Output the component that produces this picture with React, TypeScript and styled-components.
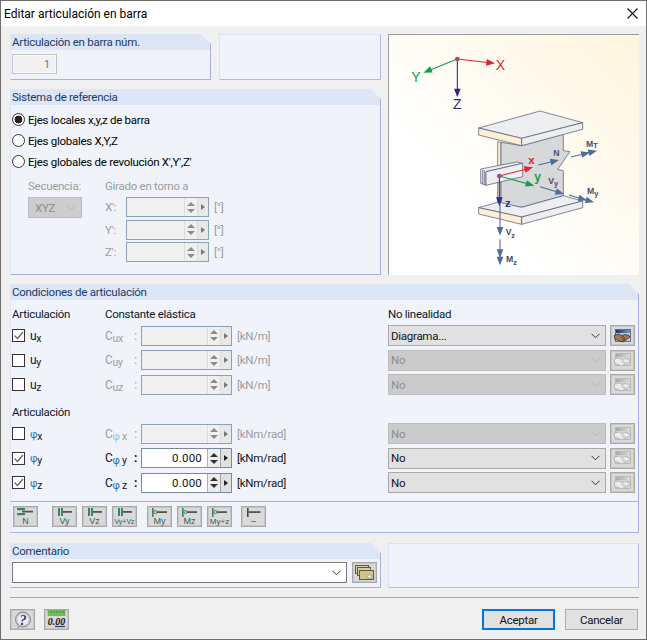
import React from "react";
import styled, { createGlobalStyle } from "styled-components";

const GlobalStyle = createGlobalStyle`
  html, body {
    margin: 0;
    padding: 0;
    background: #f0f0f0;
  }
  body {
    font-family: Roboto, "Liberation Sans", sans-serif;
    font-size: 11.5px;
    letter-spacing: -0.27px;
    color: #000;
  }
`;

const Window = styled.div`
  width: 647px;
  height: 640px;
  box-sizing: border-box;
  border: 1px solid #6e6e6e;
  background: #f0f0f0;
  display: flex;
  flex-direction: column;
  overflow: hidden;
`;

const TitleBar = styled.div`
  height: 25px;
  flex: none;
  background: #fff;
  display: flex;
  align-items: center;
  justify-content: space-between;
  padding: 0 8px 0 3px;
  font-size: 12px;
  letter-spacing: 0;
`;

const CloseButton = styled.svg`
  width: 11px;
  height: 11px;
  stroke: #111;
  stroke-width: 1.1;
`;

const Body = styled.div`
  flex: 1;
  display: flex;
  flex-direction: column;
  padding: 8px 7px 0 9px;
`;

const TopGrid = styled.div`
  display: grid;
  grid-template-columns: 371px 251px;
  column-gap: 7px;
  height: 241px;
`;

const LeftColumn = styled.div`
  display: flex;
  flex-direction: column;
  gap: 9px;
`;

const NumberRow = styled.div`
  display: grid;
  grid-template-columns: 201px 162px;
  column-gap: 8px;
  height: 46px;
`;

const Group = styled.section<{ $height?: number }>`
  box-sizing: border-box;
  background: #f0f4fa;
  border-left: 1px solid #dfe6f5;
  border-right: 1px solid #a8aeea;
  border-bottom: 1px solid #a8aeea;
  clip-path: polygon(0 0, calc(100% - 10px) 0, 100% 10px, 100% 100%, 0 100%);
  ${({ $height }) => ($height ? `height: ${$height}px;` : "")}
`;

const EmptyPanel = styled.div`
  box-sizing: border-box;
  background: #f0f3f9;
  border: 1px solid #dbe1f6;
  border-bottom-color: #b4baea;
  border-right-color: #b4baea;
`;

const GroupHeader = styled.h3`
  margin: 0;
  height: 16px;
  line-height: 16px;
  padding-left: 1px;
  background: #dce6f4;
  color: #1d3a6b;
  font-size: 11.5px;
  font-weight: 400;
`;

const NumberField = styled.div`
  margin: 4px 0 0 1px;
  width: 45px;
  height: 20px;
  box-sizing: border-box;
  border: 1px solid #c4c4c4;
  box-shadow: inset 0 0 0 1px #f8f8f8;
  background: #f0f0f0;
  color: #777;
  text-align: right;
  line-height: 18px;
  padding-right: 6px;
`;

const RadioList = styled.div`
  display: flex;
  flex-direction: column;
  gap: 8px;
  padding: 8px 0 0 1px;
`;

const RadioRow = styled.label`
  display: flex;
  align-items: center;
  height: 13px;
  gap: 3px;
`;

const RadioDot = styled.span<{ $checked?: boolean }>`
  width: 13px;
  height: 13px;
  box-sizing: border-box;
  border-radius: 50%;
  border: 1px solid #333;
  background: ${({ $checked }) =>
    $checked ? "radial-gradient(circle, #222 0 3.6px, #fff 4.2px)" : "#fff"};
`;

const RotationGrid = styled.div`
  display: grid;
  grid-template-columns: 77px 1fr;
  padding: 10px 0 0 17px;
  color: #9c9c9c;
`;

const RotationLabel = styled.div`
  height: 16px;
  line-height: 16px;
  margin-bottom: 3px;
`;

const SequenceCombo = styled.div`
  width: 54px;
  height: 21px;
  box-sizing: border-box;
  background: #cdcdcd;
  border: 1px solid #bdbdbd;
  display: flex;
  align-items: center;
  justify-content: space-between;
  padding: 0 5px 0 6px;
  color: #8c8c8c;
`;

const AngleRows = styled.div`
  display: flex;
  flex-direction: column;
  gap: 2.5px;
`;

const AngleRow = styled.div`
  display: grid;
  grid-template-columns: 21px 83px 1fr;
  align-items: center;
  height: 20px;
`;

const Unit = styled.span<{ $disabled?: boolean }>`
  padding-left: 5px;
  white-space: nowrap;
  color: ${({ $disabled }) => ($disabled ? "#9c9c9c" : "#10131f")};
`;

const SpinBox = styled.div<{ $disabled?: boolean }>`
  height: 20px;
  box-sizing: border-box;
  border: 1px solid ${({ $disabled }) => ($disabled ? "#8ba1b8" : "#7b8a99")};
  background: ${({ $disabled }) => ($disabled ? "#f0f0f0" : "#fff")};
  display: grid;
  grid-template-columns: 1fr 13px 11px;
`;

const SpinValue = styled.span`
  text-align: right;
  line-height: 18px;
  padding-right: 5px;
  letter-spacing: 0.2px;
  color: #10131f;
`;

const SpinColumn = styled.div<{ $disabled?: boolean }>`
  display: flex;
  flex-direction: column;
  align-items: center;
  justify-content: center;
  gap: 3px;
  border-left: 1px solid ${({ $disabled }) => ($disabled ? "#dcdcdc" : "#b0b0b0")};
  background: ${({ $disabled }) => ($disabled ? "#f0f0f0" : "#ececec")};
`;

const SpinArrow = styled.span<{ $down?: boolean; $disabled?: boolean }>`
  width: 0;
  height: 0;
  border-left: 4px solid transparent;
  border-right: 4px solid transparent;
  ${({ $down, $disabled }) =>
    `border-${$down ? "top" : "bottom"}: 4px solid ${$disabled ? "#8c8c8c" : "#333"};`}
`;

const SpinNext = styled.div<{ $disabled?: boolean }>`
  display: flex;
  align-items: center;
  justify-content: center;
  border-left: 1px solid ${({ $disabled }) => ($disabled ? "#dcdcdc" : "#a0a0a0")};
  background: ${({ $disabled }) => ($disabled ? "#e8e8e8" : "#e0e0e0")};
  &::after {
    content: "";
    border-top: 3.5px solid transparent;
    border-bottom: 3.5px solid transparent;
    border-left: 4px solid ${({ $disabled }) => ($disabled ? "#777" : "#222")};
  }
`;

const Picture = styled.div`
  box-sizing: border-box;
  border-top: 1px solid #9c9c9c;
  border-left: 1px solid #9c9c9c;
  background: linear-gradient(to top right, #ffffff 30%, #fdf5dd 100%);
`;

const PictureSvg = styled.svg`
  display: block;
  width: 250px;
  height: 240px;
`;

const ConditionsGroup = styled(Group)`
  margin-top: 9px;
  height: 218px;
`;

const ConditionsBody = styled.div`
  padding: 6px 0 0 1px;
`;

const ConditionRow = styled.div`
  display: grid;
  grid-template-columns: 93px 36px 91px 156px 222px 25px;
  align-items: center;
  height: 20px;
  margin-bottom: 4.5px;
`;

const ColumnTitles = styled(ConditionRow)`
  height: 16px;
  margin-bottom: 3px;
  color: #10131f;
`;

const TitleSpanLeft = styled.span`
  grid-column: 2 / span 3;
`;

const TitleRight = styled.span`
  grid-column: 5 / span 2;
`;

const SecondHeading = styled.div`
  height: 16px;
  line-height: 16px;
  margin: 10px 0 3px;
  color: #10131f;
`;

const CheckCell = styled.label`
  display: flex;
  align-items: center;
  gap: 5px;
`;

const CheckBox = styled.span`
  width: 13px;
  height: 13px;
  box-sizing: border-box;
  border: 1px solid #333;
  background: #fff;
  display: flex;
`;

const CheckMark = styled.svg`
  width: 11px;
  height: 11px;
  fill: none;
  stroke: #666;
  stroke-width: 1.3;
`;

const Symbol = styled.span`
  white-space: nowrap;
  font-size: 12px;
  color: #10131f;
  sub {
    font-size: 10.5px;
    line-height: 0;
    vertical-align: -2px;
  }
`;

const Phi = styled.span<{ $disabled?: boolean }>`
  color: ${({ $disabled }) => ($disabled ? "#9dc0dc" : "#1d6fb5")};
  font-size: 10.5px;
`;

const SpringLabel = styled.span<{ $disabled?: boolean }>`
  display: flex;
  justify-content: space-between;
  padding-right: 4px;
  font-size: 12px;
  color: ${({ $disabled }) => ($disabled ? "#9c9c9c" : "#10131f")};
  sub {
    font-size: 10.5px;
    line-height: 0;
    vertical-align: -2px;
  }
  b {
    font-weight: 700;
  }
`;

const Combo = styled.div<{ $disabled?: boolean }>`
  width: 218px;
  height: 21px;
  box-sizing: border-box;
  background: ${({ $disabled }) => ($disabled ? "#cbcbcb" : "#e1e1e1")};
  border: 1px solid ${({ $disabled }) => ($disabled ? "#bdbdbd" : "#a8a8a8")};
  color: ${({ $disabled }) => ($disabled ? "#8c8c8c" : "#10131f")};
  display: flex;
  align-items: center;
  justify-content: space-between;
  padding: 0 5px 0 2px;
`;

const Chevron = styled.svg<{ $disabled?: boolean }>`
  width: 9px;
  height: 6px;
  fill: none;
  stroke: ${({ $disabled }) => ($disabled ? "#b4b4b4" : "#333")};
  stroke-width: 1;
`;

const IconButton = styled.button`
  width: 25px;
  height: 21px;
  box-sizing: border-box;
  padding: 0;
  border: 1px solid #a9a9a9;
  box-shadow: inset 0 0 0 1px #c6c6c6;
  background: #d9d9d9;
  display: flex;
  align-items: center;
  justify-content: center;
`;

const ToolbarGroup = styled.div`
  box-sizing: border-box;
  height: 31px;
  flex: none;
  background: #f0f4fa;
  border-left: 1px solid #dfe6f5;
  border-right: 1px solid #a8aeea;
  border-bottom: 1px solid #a8aeea;
  display: flex;
  align-items: center;
  padding: 0 0 1px 2px;
`;

const ToolGap = styled.div<{ $size: number }>`
  width: ${({ $size }) => $size}px;
`;

const CommentRow = styled.div`
  margin-top: 10px;
  display: grid;
  grid-template-columns: 371px 251px;
  column-gap: 7px;
  height: 45px;
`;

const CommentBody = styled.div`
  display: flex;
  align-items: center;
  gap: 5px;
  padding: 3px 0 0 1px;
`;

const CommentInput = styled.div`
  width: 335px;
  height: 21px;
  box-sizing: border-box;
  border: 1px solid #7a7a7a;
  background: #fff;
  display: flex;
  align-items: center;
  justify-content: flex-end;
  padding-right: 5px;
`;

const Separator = styled.hr`
  margin: 9px 0 0;
  border: 0;
  height: 1px;
  background: #a6a6a6;
`;

const Footer = styled.div`
  display: flex;
  align-items: center;
  margin-top: 11px;
  padding-right: 1px;
`;

const FooterIcons = styled.div`
  display: flex;
  gap: 9px;
  margin-right: auto;
`;

const FooterButtons = styled.div`
  display: flex;
  gap: 10px;
`;

const DialogButton = styled.button<{ $primary?: boolean }>`
  width: 73px;
  height: 21px;
  box-sizing: border-box;
  padding: 0;
  font: inherit;
  letter-spacing: inherit;
  color: #111;
  background: #e1e1e1;
  border: ${({ $primary }) => ($primary ? "2px solid #0078d7" : "1px solid #adadad")};
`;

const HandIcon = ({ disabled }: { disabled?: boolean }) => (
  <svg width="17" height="14" viewBox="0 0 17 14">
    <defs>
      <linearGradient id={disabled ? "barOff" : "barOn"} x1="0" x2="1" y1="0" y2="0">
        <stop offset="0" stopColor={disabled ? "#a8a8a8" : "#1c3468"} />
        <stop offset="1" stopColor={disabled ? "#dadada" : "#5f9ad8"} />
      </linearGradient>
    </defs>
    <rect x="1.5" y="0.5" width="15" height="12" fill={disabled ? "#d4d4d4" : "#c7ced8"} stroke={disabled ? "#b4b4b4" : "#4b5563"} strokeWidth="0.8" />
    <rect x="2" y="1" width="14" height="3" fill={`url(#${disabled ? "barOff" : "barOn"})`} />
    <path
      d="M0.5 6 L5 5 L8 6.5 L11 5.5 L15 6.5 L16 8 L12 11 L8 13 L4.5 11.5 L0.5 10 Z"
      fill={disabled ? "#ececec" : "#a4775c"}
      stroke={disabled ? "#a8a8a8" : "#33231d"}
      strokeWidth="0.7"
    />
    <path d="M7 8.5 L10 7.5 M8 10 L11 9 M9 11.5 L12 10" stroke={disabled ? "#a8a8a8" : "#33231d"} strokeWidth="0.6" />
  </svg>
);

const StackIcon = () => (
  <svg width="19" height="15" viewBox="0 0 19 15">
    <rect x="0.5" y="0.5" width="13" height="8" fill="#d6cfa4" stroke="#5f5a3c" />
    <rect x="2.5" y="2.5" width="13" height="8" fill="#d6cfa4" stroke="#5f5a3c" />
    <rect x="4.5" y="5.5" width="14" height="9" fill="#cfc68f" stroke="#5f5a3c" />
    <rect x="13" y="10" width="3" height="3" fill="#fff" stroke="#777" strokeWidth="0.5" />
  </svg>
);

type ToolKind = "axial" | "shear" | "moment" | "free";

const ToolIcon = ({ kind, label, size = 9 }: { kind: ToolKind; label: string; size?: number }) => (
  <svg width="23" height="19" viewBox="0 0 23 19">
    {kind === "axial" && (
      <>
        <rect x="3" y="1" width="8" height="2.2" fill="#3f7f6c" />
        <rect x="3" y="6" width="8" height="2.2" fill="#3f7f6c" />
        <rect x="8" y="3.7" width="11" height="1.8" fill="#555" />
      </>
    )}
    {kind === "shear" && (
      <>
        <rect x="5" y="1" width="2" height="8" fill="#3f7f6c" />
        <rect x="8" y="1" width="2" height="8" fill="#3f7f6c" />
        <rect x="10" y="4" width="9" height="1.8" fill="#555" />
      </>
    )}
    {kind === "moment" && (
      <>
        <rect x="4" y="1" width="1.6" height="9" fill="#3f7f6c" />
        <circle cx="7.5" cy="5" r="1.6" fill="none" stroke="#3f7f6c" />
        <rect x="9" y="4.2" width="10" height="1.8" fill="#555" />
      </>
    )}
    {kind === "free" && (
      <>
        <rect x="5" y="1" width="1.6" height="9" fill="#444" />
        <rect x="6.5" y="4.2" width="12" height="1.8" fill="#555" />
      </>
    )}
    <text x="11.5" y="17" textAnchor="middle" fontSize={size} fontFamily="Liberation Sans" letterSpacing="0" fill="#33615a">
      {label}
    </text>
  </svg>
);

const HelpIcon = () => (
  <svg width="20" height="18" viewBox="0 0 20 18">
    <circle cx="10" cy="8.5" r="7.5" fill="#c9c9ce" stroke="#85858c" />
    <circle cx="10" cy="8.5" r="5.5" fill="#f0f0f3" />
    <path d="M5 14 L4 17.5 L9 15.5 Z" fill="#a8a8ae" />
    <text x="10" y="13.5" textAnchor="middle" fontSize="14" fontWeight="700" fontStyle="italic" fontFamily="Liberation Serif" fill="#27357a">
      ?
    </text>
  </svg>
);

const DecimalsIcon = () => (
  <svg width="21" height="19" viewBox="0 0 21 19">
    <rect x="2" y="0.5" width="17" height="5" fill="#6fbf55" stroke="#4d9a3c" strokeWidth="0.5" />
    <path d="M5 1v2M8 1v2M11 1v2M14 1v2M17 1v2" stroke="#2f7a2a" strokeWidth="0.7" />
    <text x="10.5" y="14.5" textAnchor="middle" fontSize="10" fontWeight="700" fontStyle="italic" fontFamily="Liberation Serif" letterSpacing="0" fill="#111">
      0.00
    </text>
    <path d="M9 16.5h10" stroke="#27357a" strokeWidth="1.2" />
  </svg>
);

const ChevronDown = ({ disabled }: { disabled?: boolean }) => (
  <Chevron $disabled={disabled} viewBox="0 0 9 6">
    <path d="M0.5 0.8 L4.5 4.8 L8.5 0.8" />
  </Chevron>
);

const SpinField = ({ value, disabled }: { value?: string; disabled?: boolean }) => (
  <SpinBox $disabled={disabled}>
    <SpinValue>{value}</SpinValue>
    <SpinColumn $disabled={disabled}>
      <SpinArrow $disabled={disabled} />
      <SpinArrow $disabled={disabled} $down />
    </SpinColumn>
    <SpinNext $disabled={disabled} />
  </SpinBox>
);

const Arrow = ({ x1, y1, x2, y2, color, double }: { x1: number; y1: number; x2: number; y2: number; color: string; double?: boolean }) => {
  const angle = (Math.atan2(y2 - y1, x2 - x1) * 180) / Math.PI;
  const len = Math.hypot(x2 - x1, y2 - y1);
  return (
    <g transform={`translate(${x2} ${y2}) rotate(${angle})`} fill={color}>
      <rect x={-len} y={-1.6} width={len - 10} height={3.2} />
      <path d="M0 0 L-26 -10 L-26 10 Z" />
      {double && <path d="M-22 0 L-48 -10 L-48 10 Z" />}
    </g>
  );
};

const steel = "#4f6c98";
const edge = "#4c4e6c";

const BeamDiagram = () => (
  <PictureSvg viewBox="12 15 750 720">
    <g fontFamily="Liberation Sans" letterSpacing="0">
      <Arrow x1={217} y1={87} x2={330} y2={100} color="#e3212f" />
      <Arrow x1={217} y1={87} x2={115} y2={128} color="#0f9d4f" />
      <Arrow x1={217} y1={87} x2={217} y2={202} color="#2e2a85" />
      <circle cx={217} cy={87} r={7} fill="#a0487e" />
      <text x={332} y={120} fontSize={42} fill="#e3212f">X</text>
      <text x={79} y={155} fontSize={42} fill="#0f9d4f">Y</text>
      <text x={204} y={238} fontSize={42} fill="#2e2a85">Z</text>

      <g stroke={edge} strokeWidth={2} strokeLinejoin="round">
        <path d="M348 337 L338 335 L338 520 L348 522 Z" fill="#fbf0d4" />
        <path d="M348 337 L410 347 L535 312 L535 362 L555 365 L518 418 L535 422 L535 497 L410 532 L348 520 Z" fill="#d6d8da" />
        <path d="M281 294 L465 243 L593 278 L410 325 Z" fill="#eceeef" />
        <path d="M281 294 L410 325 L410 347 L281 315 Z" fill="#fbf0d4" />
        <path d="M410 325 L593 278 L593 298 L410 347 Z" fill="#eceeef" />
        <path d="M281 533 L340 516 L410 532 L535 497 L593 513 L410 561 Z" fill="#eceeef" />
        <path d="M281 533 L410 561 L410 583 L281 552 Z" fill="#fbf0d4" />
        <path d="M410 561 L593 513 L593 533 L410 583 Z" fill="#eceeef" />
        <path d="M287 417 L395 396 L413 400 L303 425 L303 466 L287 460 Z" fill="#eceeef" />
        <path d="M293 419 V462 M298 421 V464" fill="none" />
        <path d="M303 425 L413 400 L413 440 L303 466 Z" fill="#eceeef" />
      </g>

      <Arrow x1={345} y1={520} x2={345} y2={617} color={steel} />
      <Arrow x1={345} y1={628} x2={345} y2={706} color={steel} double />
      <Arrow x1={343} y1={438} x2={444} y2={412} color="#e3212f" />
      <Arrow x1={343} y1={438} x2={448} y2={467} color="#0f9d4f" />
      <Arrow x1={343} y1={438} x2={343} y2={528} color="#2e2a85" />
      <circle cx={343} cy={438} r={7} fill="#a0487e" />
      <Arrow x1={460} y1={405} x2={522} y2={390} color={steel} />
      <Arrow x1={558} y1={381} x2={636} y2={362} color={steel} double />
      <Arrow x1={465} y1={470} x2={537} y2={492} color={steel} />
      <Arrow x1={552} y1={495} x2={627} y2={517} color={steel} double />

      <g fontWeight={700}>
        <text x={430} y={402} fontSize={34} fill="#e3212f">x</text>
        <text x={448} y={452} fontSize={36} fill="#0f9d4f">y</text>
        <text x={360} y={532} fontSize={34} fill="#2e2a85">z</text>
        <g fill="#4a4d70" fontSize={26}>
          <text x={505} y={379}>N</text>
          <text x={603} y={350}>M</text>
          <text x={625} y={353} fontSize={22}>T</text>
          <text x={490} y={461}>V</text>
          <text x={507} y={469} fontSize={22}>y</text>
          <text x={606} y={493}>M</text>
          <text x={628} y={497} fontSize={22}>y</text>
          <text x={362} y={615}>V</text>
          <text x={379} y={623} fontSize={22}>z</text>
          <text x={363} y={697}>M</text>
          <text x={385} y={704} fontSize={22}>z</text>
        </g>
      </g>
    </g>
  </PictureSvg>
);

interface Condition {
  axis: string;
  checked: boolean;
  nonlinear: string;
  comboDisabled: boolean;
  activeHand?: boolean;
}

const linear: Condition[] = [
  { axis: "x", checked: true, nonlinear: "Diagrama...", comboDisabled: false, activeHand: true },
  { axis: "y", checked: false, nonlinear: "No", comboDisabled: true },
  { axis: "z", checked: false, nonlinear: "No", comboDisabled: true },
];

const rotational: Condition[] = [
  { axis: "x", checked: false, nonlinear: "No", comboDisabled: true },
  { axis: "y", checked: true, nonlinear: "No", comboDisabled: false },
  { axis: "z", checked: true, nonlinear: "No", comboDisabled: false },
];

const ConditionLine = ({ row, rotationalRow }: { row: Condition; rotationalRow: boolean }) => {
  // the spring of a u row stays off even when the release is checked
  const off = !(rotationalRow && row.checked);
  return (
    <ConditionRow>
      <CheckCell>
        <CheckBox>
          {row.checked && (
            <CheckMark viewBox="0 0 11 11">
              <path d="M1.5 5.5 L4.5 8.5 L10 2" />
            </CheckMark>
          )}
        </CheckBox>
        <Symbol>
          {rotationalRow ? <Phi>φ</Phi> : "u"}
          <sub>{row.axis}</sub>
        </Symbol>
      </CheckCell>
      <SpringLabel $disabled={off}>
        <span>
          C
          <sub>
            {rotationalRow ? <Phi $disabled={off}>φ</Phi> : "u"}
            {rotationalRow ? ` ${row.axis}` : row.axis}
          </sub>
        </span>
        {off ? <span>:</span> : <b>:</b>}
      </SpringLabel>
      <SpinField disabled={off} value={off ? "" : "0.000"} />
      <Unit $disabled={off}>{rotationalRow ? "[kNm/rad]" : "[kN/m]"}</Unit>
      <Combo $disabled={row.comboDisabled}>
        {row.nonlinear}
        <ChevronDown disabled={row.comboDisabled} />
      </Combo>
      <IconButton>
        <HandIcon disabled={!row.activeHand} />
      </IconButton>
    </ConditionRow>
  );
};

export default function App() {
  return (
    <>
      <GlobalStyle />
      <Window>
        <TitleBar>
          Editar articulación en barra
          <CloseButton viewBox="0 0 11 11">
            <path d="M0.5 0.5 L10.5 10.5 M10.5 0.5 L0.5 10.5" />
          </CloseButton>
        </TitleBar>
        <Body>
          <TopGrid>
            <LeftColumn>
              <NumberRow>
                <Group>
                  <GroupHeader>Articulación en barra núm.</GroupHeader>
                  <NumberField>1</NumberField>
                </Group>
                <EmptyPanel />
              </NumberRow>
              <Group $height={186}>
                <GroupHeader>Sistema de referencia</GroupHeader>
                <RadioList>
                  <RadioRow><RadioDot $checked />Ejes locales x,y,z de barra</RadioRow>
                  <RadioRow><RadioDot />Ejes globales X,Y,Z</RadioRow>
                  <RadioRow><RadioDot />Ejes globales de revolución X',Y',Z'</RadioRow>
                </RadioList>
                <RotationGrid>
                  <div>
                    <RotationLabel>Secuencia:</RotationLabel>
                    <SequenceCombo>
                      XYZ
                      <ChevronDown disabled />
                    </SequenceCombo>
                  </div>
                  <div>
                    <RotationLabel>Girado en torno a</RotationLabel>
                    <AngleRows>
                      {["X'", "Y'", "Z'"].map(axis => (
                        <AngleRow key={axis}>
                          <span>{axis}:</span>
                          <SpinField disabled />
                          <Unit $disabled>[°]</Unit>
                        </AngleRow>
                      ))}
                    </AngleRows>
                  </div>
                </RotationGrid>
              </Group>
            </LeftColumn>
            <Picture>
              <BeamDiagram />
            </Picture>
          </TopGrid>

          <ConditionsGroup>
            <GroupHeader>Condiciones de articulación</GroupHeader>
            <ConditionsBody>
              <ColumnTitles>
                <span>Articulación</span>
                <TitleSpanLeft>Constante elástica</TitleSpanLeft>
                <TitleRight>No linealidad</TitleRight>
              </ColumnTitles>
              {linear.map(row => (
                <ConditionLine key={row.axis} row={row} rotationalRow={false} />
              ))}
              <SecondHeading>Articulación</SecondHeading>
              {rotational.map(row => (
                <ConditionLine key={row.axis} row={row} rotationalRow />
              ))}
            </ConditionsBody>
          </ConditionsGroup>

          <ToolbarGroup>
            <IconButton><ToolIcon kind="axial" label="N" /></IconButton>
            <ToolGap $size={14} />
            <IconButton><ToolIcon kind="shear" label="Vy" /></IconButton>
            <ToolGap $size={5} />
            <IconButton><ToolIcon kind="shear" label="Vz" /></IconButton>
            <ToolGap $size={5} />
            <IconButton><ToolIcon kind="shear" label="Vy+Vz" size={7} /></IconButton>
            <ToolGap $size={10} />
            <IconButton><ToolIcon kind="moment" label="My" /></IconButton>
            <ToolGap $size={5} />
            <IconButton><ToolIcon kind="moment" label="Mz" /></IconButton>
            <ToolGap $size={5} />
            <IconButton><ToolIcon kind="moment" label="My+z" size={8} /></IconButton>
            <ToolGap $size={9} />
            <IconButton><ToolIcon kind="free" label="–" /></IconButton>
          </ToolbarGroup>

          <CommentRow>
            <Group>
              <GroupHeader>Comentario</GroupHeader>
              <CommentBody>
                <CommentInput>
                  <ChevronDown />
                </CommentInput>
                <IconButton>
                  <StackIcon />
                </IconButton>
              </CommentBody>
            </Group>
            <EmptyPanel />
          </CommentRow>

          <Separator />

          <Footer>
            <FooterIcons>
              <IconButton><HelpIcon /></IconButton>
              <IconButton><DecimalsIcon /></IconButton>
            </FooterIcons>
            <FooterButtons>
              <DialogButton $primary>Aceptar</DialogButton>
              <DialogButton>Cancelar</DialogButton>
            </FooterButtons>
          </Footer>
        </Body>
      </Window>
    </>
  );
}
